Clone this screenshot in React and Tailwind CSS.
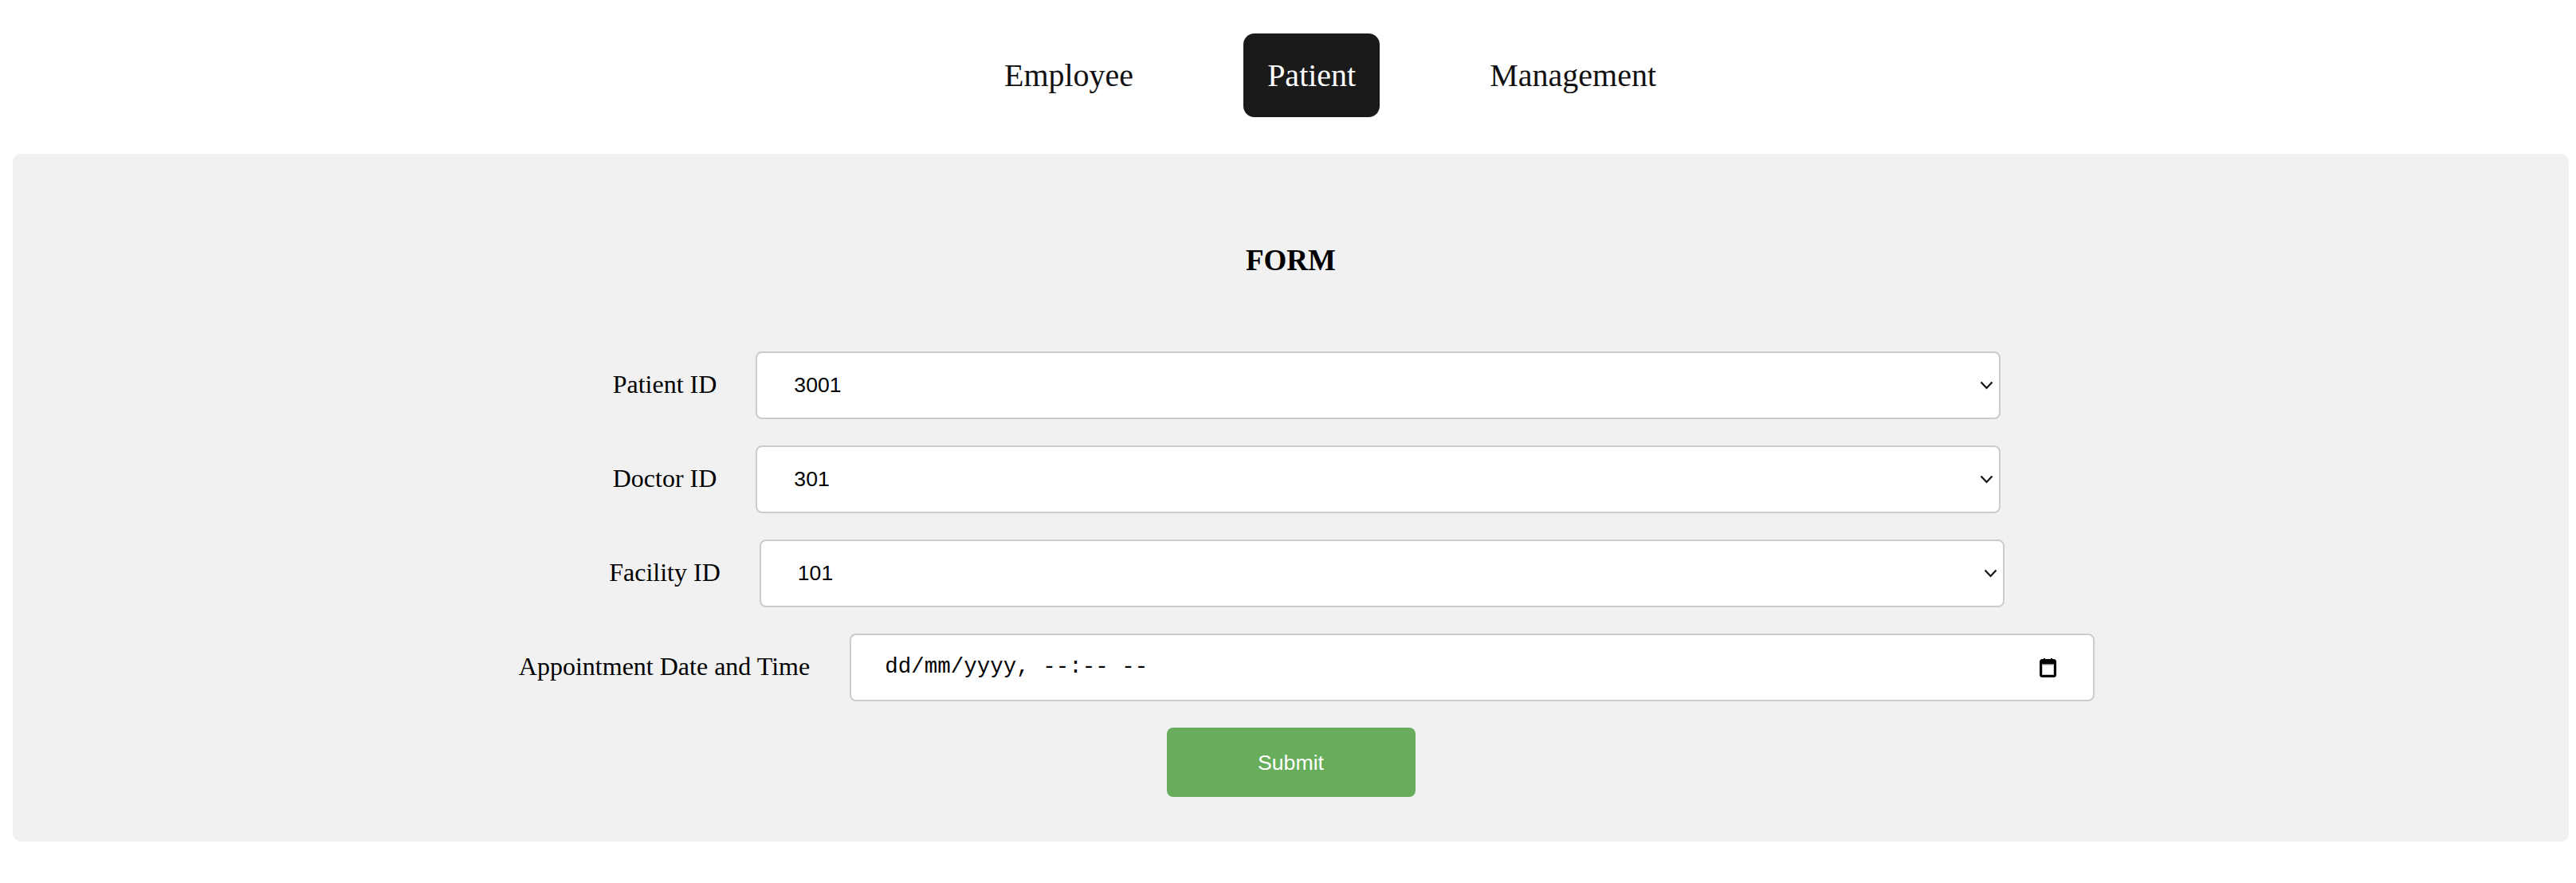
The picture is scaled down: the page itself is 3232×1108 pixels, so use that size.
import { useState } from 'react'

const tabs = ['Employee', 'Patient', 'Management']

function Chevron() {
  return (
    <svg width="17" height="11" viewBox="0 0 17 11" fill="none">
      <path d="M1.5 1.5 L8.5 9 L15.5 1.5" stroke="#111" strokeWidth="2.2" />
    </svg>
  )
}

function CalendarIcon() {
  return (
    <svg width="21" height="24" viewBox="0 0 21 24" fill="none">
      <rect x="5" y="0" width="2" height="4" fill="#000" />
      <rect x="14" y="0" width="2" height="4" fill="#000" />
      <rect x="1.5" y="2.5" width="18" height="20" rx="2" fill="#fff" stroke="#000" strokeWidth="3" />
      <rect x="1.5" y="2.5" width="18" height="5" fill="#000" />
      <rect x="3.5" y="8.5" width="14" height="12" fill="none" stroke="#c8c8c8" strokeWidth="1" />
    </svg>
  )
}

function SelectBox({ value }) {
  return (
    <div className="ml-[49px] flex h-[85px] w-[1562px] items-center justify-between rounded-[8px] border-2 border-[#cccccc] bg-white pl-[46px] pr-[7px] font-['Liberation_Sans',Arial,sans-serif] text-[26.67px] text-black">
      <span className="pb-[2px]">{value}</span>
      <Chevron />
    </div>
  )
}

function Row({ label, children }) {
  return (
    <div className="flex items-center pl-[40px]">
      <label className="mb-[4px] whitespace-nowrap text-[32px] leading-none">{label}</label>
      {children}
    </div>
  )
}

export default function App() {
  const [active, setActive] = useState('Patient')

  return (
    <div className="min-h-screen bg-white font-['Liberation_Serif','Times_New_Roman',serif] text-black">
      <nav className="flex justify-center gap-[108px] pl-[106px] pt-[42px]">
        {tabs.map((t) => (
          <button
            key={t}
            onClick={() => setActive(t)}
            className={
              t === active
                ? 'flex h-[105px] items-center rounded-[14px] bg-[#1a1a1a] px-[30px] text-[40px] text-white'
                : 'flex h-[105px] items-center rounded-[14px] px-[30px] text-[40px] text-[#111]'
            }
          >
            {t}
          </button>
        ))}
      </nav>

      <div className="ml-[16px] mr-[9px] mt-[46px] rounded-[10px] bg-[#f1f1f1] pb-[56px] pt-[113px]">
        <h3 className="text-center text-[37px] font-bold leading-[42px]">FORM</h3>

        <form className="mt-[93px] flex flex-col items-center gap-[33px]" onSubmit={(e) => e.preventDefault()}>
          <Row label="Patient ID">
            <SelectBox value="3001" />
          </Row>
          <Row label="Doctor ID">
            <SelectBox value="301" />
          </Row>
          <Row label="Facility ID">
            <SelectBox value="101" />
          </Row>
          <Row label="Appointment Date and Time">
            <div className="ml-[50px] flex h-[85px] w-[1562px] items-center justify-between rounded-[8px] border-2 border-[#cccccc] bg-white pl-[42px] pr-[46px]">
              <span className="whitespace-pre pb-[2px] font-['Liberation_Mono','DejaVu_Sans_Mono',monospace] text-[27.5px] text-black">
                dd/mm/yyyy, --:-- --
              </span>
              <CalendarIcon />
            </div>
          </Row>
          <button
            type="submit"
            className="h-[87px] w-[312px] rounded-[8px] bg-[#67ad5c] font-['Liberation_Sans',Arial,sans-serif] text-[26.67px] text-white"
          >
            Submit
          </button>
        </form>
      </div>
    </div>
  )
}
